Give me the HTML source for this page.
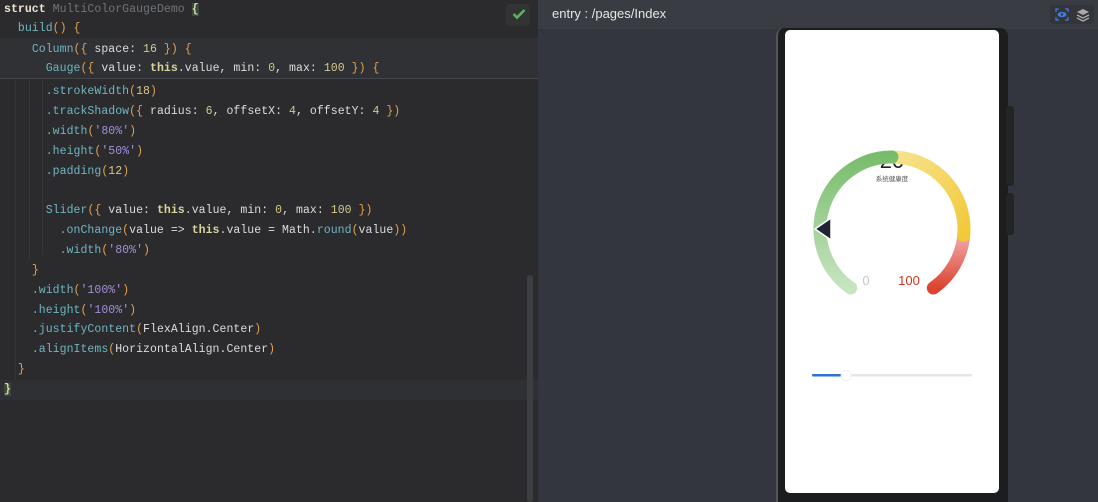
<!DOCTYPE html>
<html><head><meta charset="utf-8"><style>
*{margin:0;padding:0;box-sizing:border-box}
html,body{width:1098px;height:502px;overflow:hidden}
body{background:#33363e;position:relative;font-family:"Liberation Sans",sans-serif}
#ed{position:absolute;left:0;top:0;width:538px;height:502px;background:#2b2b2d}
.hl{position:absolute;left:0;width:538px;background:#303134}
.ln{position:absolute;left:4px;font-family:"Liberation Mono",monospace;font-size:11.5px;color:#dcdcdc;white-space:pre;line-height:20px;letter-spacing:0.05px}
.k{color:#ece6d2;font-weight:bold}.c{color:#6f737a}.f{color:#6fb5c2}.b{color:#e3a04e}.n{color:#d3c98a}.s{color:#a58fd8}.t{color:#d9d49b;font-weight:bold}
.guide{position:absolute;width:1px;background:#343538}
#rt{position:absolute;left:538px;top:0;width:560px;height:502px;background:#33363e}
#bar{position:absolute;left:538px;top:0;width:560px;height:29px;background:#3a3c43}
</style></head><body>
<div id="ed">
 <div class="hl" style="top:38px;height:40px"></div>
 <div style="position:absolute;left:0;top:78px;width:538px;height:1px;background:#45464a"></div>
 <div class="hl" style="top:380px;height:20px;background:#2f3033"></div>
 <div class="guide" style="left:15px;top:80px;height:300px"></div>
 <div class="guide" style="left:29px;top:80px;height:180px"></div>
 <div class="guide" style="left:42px;top:80px;height:175px"></div>
 <div style="position:absolute;left:506px;top:4px;width:24px;height:22px;background:#323335;border-radius:3px"></div>
 <svg style="position:absolute;left:512px;top:8px" width="14" height="12"><path d="M1.5 6 L5 9.5 L12.5 2" stroke="#5fb05f" stroke-width="2.6" fill="none"/></svg>
 <div style="position:absolute;left:527px;top:275px;width:6px;height:227px;background:#3d3e41;border-radius:3px"></div>
 <div class="ln" style="top:0"><span class="k">struct</span> <span class="c">MultiColorGaugeDemo</span> <span class="t" style="background:#3b4a3f">{</span></div>
 <div class="ln" style="top:19px">  <span class="f">build</span><span class="b">()</span> <span class="b">{</span></div>
 <div class="ln" style="top:40px">    <span class="f">Column</span><span class="b">({</span> space: <span class="n">16</span> <span class="b">})</span> <span class="b">{</span></div>
 <div class="ln" style="top:59px">      <span class="f">Gauge</span><span class="b">({</span> value: <span class="t">this</span>.value, min: <span class="n">0</span>, max: <span class="n">100</span> <span class="b">})</span> <span class="b">{</span></div>
 <div class="ln" style="top:82px">      <span class="f">.strokeWidth</span><span class="b">(</span><span class="n">18</span><span class="b">)</span></div>
 <div class="ln" style="top:102px">      <span class="f">.trackShadow</span><span class="b">({</span> radius: <span class="n">6</span>, offsetX: <span class="n">4</span>, offsetY: <span class="n">4</span> <span class="b">})</span></div>
 <div class="ln" style="top:122px">      <span class="f">.width</span><span class="b">(</span><span class="s">'80%'</span><span class="b">)</span></div>
 <div class="ln" style="top:142px">      <span class="f">.height</span><span class="b">(</span><span class="s">'50%'</span><span class="b">)</span></div>
 <div class="ln" style="top:162px">      <span class="f">.padding</span><span class="b">(</span><span class="n">12</span><span class="b">)</span></div>
 <div class="ln" style="top:201px">      <span class="f">Slider</span><span class="b">({</span> value: <span class="t">this</span>.value, min: <span class="n">0</span>, max: <span class="n">100</span> <span class="b">})</span></div>
 <div class="ln" style="top:221px">        <span class="f">.onChange</span><span class="b">(</span>value =&gt; <span class="t">this</span>.value = Math.<span class="f">round</span><span class="b">(</span>value<span class="b">))</span></div>
 <div class="ln" style="top:241px">        <span class="f">.width</span><span class="b">(</span><span class="s">'80%'</span><span class="b">)</span></div>
 <div class="ln" style="top:261px">    <span class="b">}</span></div>
 <div class="ln" style="top:281px">    <span class="f">.width</span><span class="b">(</span><span class="s">'100%'</span><span class="b">)</span></div>
 <div class="ln" style="top:301px">    <span class="f">.height</span><span class="b">(</span><span class="s">'100%'</span><span class="b">)</span></div>
 <div class="ln" style="top:320px">    <span class="f">.justifyContent</span><span class="b">(</span>FlexAlign.Center<span class="b">)</span></div>
 <div class="ln" style="top:340px">    <span class="f">.alignItems</span><span class="b">(</span>HorizontalAlign.Center<span class="b">)</span></div>
 <div class="ln" style="top:360px">  <span class="b">}</span></div>
 <div class="ln" style="top:380px"><span class="t" style="background:#3b4a3f">}</span></div>
</div>
<div id="rt"></div>
<div id="bar"></div>
<div style="position:absolute;left:552px;top:6px;color:#e6e6e6;font-size:13px">entry : /pages/Index</div>
<div style="position:absolute;left:1050px;top:5px;width:44px;height:19px;background:#33353b;border-radius:3px"></div>
<svg style="position:absolute;left:1054px;top:7px" width="16" height="15"><path d="M2 5V2h3M11 2h3v3M14 10v3h-3M5 13H2v-3" stroke="#3f7be0" stroke-width="1.3" fill="none"/><ellipse cx="8" cy="7.5" rx="4.5" ry="2.6" fill="#3f7be0"/><circle cx="8" cy="7.5" r="1.2" fill="#33353b"/></svg>
<svg style="position:absolute;left:1076px;top:7px" width="14" height="15"><path d="M7 2L13 5 7 8 1 5z" fill="#aaa"/><path d="M1 8l6 3 6-3M1 11l6 3 6-3" stroke="#aaa" stroke-width="1.3" fill="none"/></svg>
<div style="position:absolute;left:776px;top:28px;width:232px;height:474px;background:#1c1d1e;border-radius:8px 8px 0 0;border-left:2px solid #555;"></div>
<div style="position:absolute;left:1006px;top:106px;width:8px;height:80px;background:#222426;border-radius:3px"></div>
<div style="position:absolute;left:1006px;top:193px;width:8px;height:42px;background:#222426;border-radius:3px"></div>
<div style="position:absolute;left:785px;top:30px;width:214px;height:463px;background:#fff;border-radius:5px"></div>
<svg style="position:absolute;left:785px;top:30px" width="214" height="463" viewBox="785 30 214 463">
 <defs>
  <linearGradient id="g" x1="0" y1="0" x2="0" y2="1"><stop offset="0" stop-color="#79bd6c"/><stop offset="1" stop-color="#c7e5c0"/></linearGradient>
  <linearGradient id="y" x1="0" y1="0" x2="1" y2="1"><stop offset="0" stop-color="#f7e38f"/><stop offset="1" stop-color="#f2c93a"/></linearGradient>
  <linearGradient id="r" x1="0" y1="0" x2="0" y2="1"><stop offset="0" stop-color="#f0a9a9"/><stop offset="1" stop-color="#dc4431"/></linearGradient>
 </defs>
 <text x="892" y="168" font-size="22" text-anchor="middle" fill="#222" font-family="Liberation Sans">20</text>
 <text x="892" y="181" font-size="6.5" text-anchor="middle" fill="#555" font-family="'Noto Sans CJK SC',sans-serif">系统健康度</text>
 <path d="M933.3 288 A72 72 0 0 0 963.7 235.3" stroke="url(#r)" stroke-width="13" fill="none" stroke-linecap="round"/>
 <path d="M892 157 A72 72 0 0 1 963.7 235.3" stroke="url(#y)" stroke-width="13" fill="none" stroke-linecap="round"/>
 <path d="M850.7 288 A72 72 0 0 1 892 157" stroke="url(#g)" stroke-width="13" fill="none" stroke-linecap="round"/>
 <path d="M815 229 L831 218 L831 240z" fill="#1e2433" stroke="#fff" stroke-width="1.5"/>
 <text x="866" y="285" font-size="13" text-anchor="middle" fill="#c8c8c8" font-family="Liberation Sans">0</text>
 <text x="909" y="285" font-size="13" text-anchor="middle" fill="#d2321f" font-family="Liberation Sans">100</text>
 <rect x="812" y="374" width="160" height="2.5" rx="1" fill="#e6e6e6"/>
 <rect x="812" y="374" width="33" height="2.5" rx="1" fill="#2f72d8"/>
 <circle cx="846" cy="375.5" r="5" fill="#fff" stroke="#eee" stroke-width="0.8"/>
</svg>
</body></html>
